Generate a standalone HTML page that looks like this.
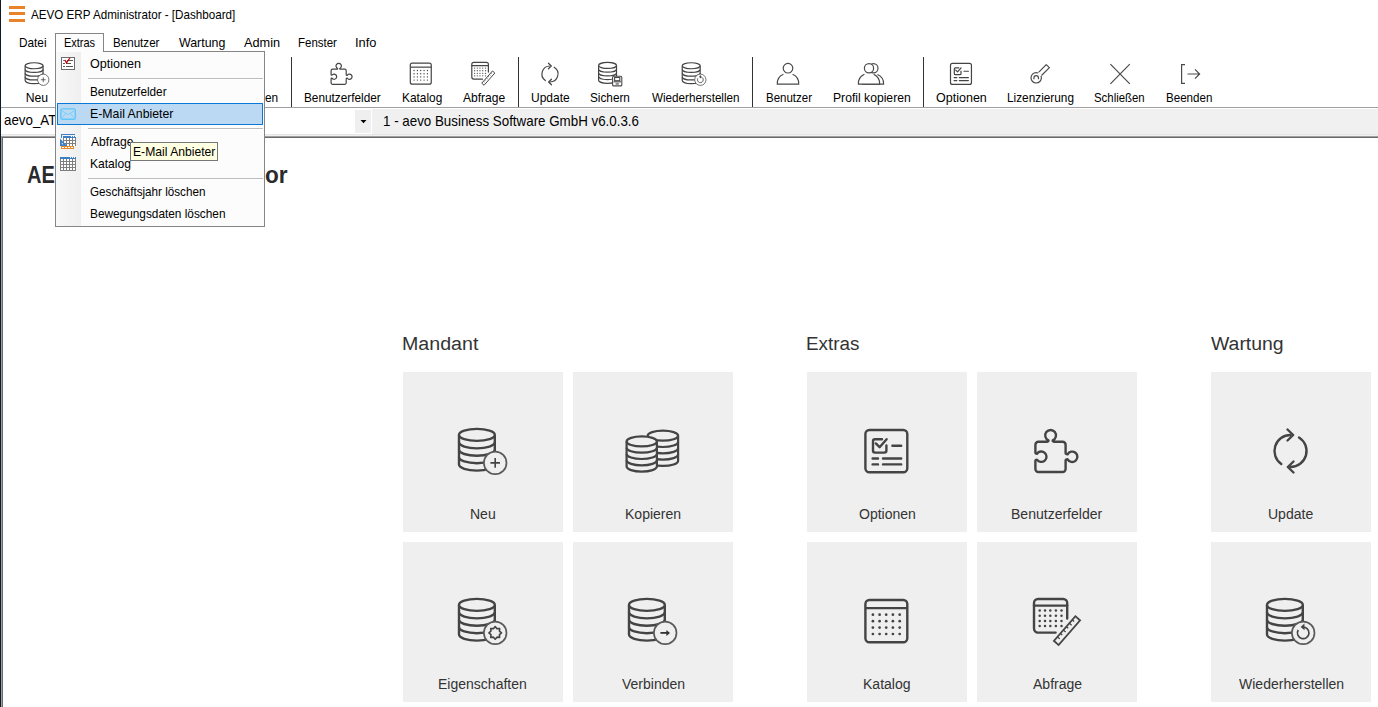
<!DOCTYPE html>
<html><head><meta charset="utf-8"><title>AEVO ERP Administrator - [Dashboard]</title>
<style>
html,body{margin:0;padding:0;width:1378px;height:707px;overflow:hidden;background:#fff;}
body{position:relative;font-family:"Liberation Sans",sans-serif;}
.t{position:absolute;white-space:nowrap;line-height:normal;transform-origin:0 0;}
.abs{position:absolute;}
.r{position:absolute;}
.tile{position:absolute;width:160px;height:160px;background:#efefef;}
.tile svg{position:absolute;left:0;top:0;}
</style></head><body>
<!-- left window edge -->
<div class="r" style="left:0;top:0;width:1px;height:707px;background:#111a25;z-index:30"></div>
<!-- hamburger -->
<div class="r" style="left:9px;top:6px;width:16px;height:3px;background:#e8822b"></div>
<div class="r" style="left:9px;top:12px;width:16px;height:3px;background:#e8822b"></div>
<div class="r" style="left:9px;top:19px;width:16px;height:3px;background:#e8822b"></div>
<!-- toolbar separators -->
<div class="r" style="left:291px;top:57px;width:1px;height:50px;background:#333"></div>
<div class="r" style="left:518px;top:57px;width:1px;height:50px;background:#333"></div>
<div class="r" style="left:752px;top:57px;width:1px;height:50px;background:#333"></div>
<div class="r" style="left:923px;top:57px;width:1px;height:50px;background:#333"></div>
<!-- combo bar -->
<div class="r" style="left:1px;top:107px;width:1377px;height:1px;background:#a0a0a0"></div>
<div class="r" style="left:1px;top:108px;width:1377px;height:28px;background:#f0f0f0"></div>
<div class="r" style="left:1px;top:108px;width:1377px;height:1px;background:#fff"></div>
<div class="r" style="left:1px;top:108px;width:371px;height:26px;background:#fff"></div>
<div class="r" style="left:355px;top:110px;width:16px;height:23px;background:#efefef"></div>
<svg class="abs" style="left:0;top:0" width="400" height="140"><path d="M360.5 120 H366.5 L363.5 123.3Z" fill="#000"/></svg>
<div class="r" style="left:1px;top:134px;width:1377px;height:1px;background:#e6e6e6"></div>
<div class="r" style="left:1px;top:136px;width:1377px;height:1px;background:#a0a0a0"></div>
<div class="r" style="left:2px;top:137px;width:1376px;height:1px;background:#6a6a6a"></div>
<div class="r" style="left:1px;top:136px;width:1px;height:571px;background:#a0a0a0"></div>
<div class="r" style="left:2px;top:137px;width:1px;height:570px;background:#6a6a6a"></div>
<!-- tiles -->
<div class="tile" style="left:403px;top:372px"><svg width="160" height="160" viewBox="0 0 160 160"><g fill="#efefef" stroke="#444" stroke-width="2.4"><path d="M56.00000000000001 62.9 V92.6 A17.9 6.0 0 0 0 91.80000000000001 92.6 V62.9"/><path d="M56.00000000000001 70.33 A17.9 6.0 0 0 0 91.80000000000001 70.33" fill="none"/><path d="M56.00000000000001 77.75 A17.9 6.0 0 0 0 91.80000000000001 77.75" fill="none"/><path d="M56.00000000000001 85.18 A17.9 6.0 0 0 0 91.80000000000001 85.18" fill="none"/><ellipse cx="73.9" cy="62.9" rx="17.9" ry="6.0"/></g><circle cx="92.2" cy="90.9" r="11.3" fill="#efefef" stroke="#5a5a5a" stroke-width="1.7"/><path d="M87.4 90.9H97.0M92.2 86.10000000000001V95.7" stroke="#444" stroke-width="1.6"/></svg></div>
<div class="tile" style="left:573px;top:372px"><svg width="160" height="160" viewBox="0 0 160 160"><g fill="#efefef" stroke="#444" stroke-width="2.2"><path d="M74.7 63.7 V88.9 A15.2 5.0 0 0 0 105.10000000000001 88.9 V63.7"/><path d="M74.70 70.00 A15.2 5.0 0 0 0 105.10 70.00" fill="none"/><path d="M74.70 76.30 A15.2 5.0 0 0 0 105.10 76.30" fill="none"/><path d="M74.70 82.60 A15.2 5.0 0 0 0 105.10 82.60" fill="none"/><ellipse cx="89.9" cy="63.7" rx="15.2" ry="5.0"/></g><g fill="#efefef" stroke="#444" stroke-width="2.2"><path d="M53.6 69.4 V94.60000000000001 A15.15 5.0 0 0 0 83.9 94.60000000000001 V69.4"/><path d="M53.60 75.70 A15.15 5.0 0 0 0 83.90 75.70" fill="none"/><path d="M53.60 82.00 A15.15 5.0 0 0 0 83.90 82.00" fill="none"/><path d="M53.60 88.30 A15.15 5.0 0 0 0 83.90 88.30" fill="none"/><ellipse cx="68.75" cy="69.4" rx="15.15" ry="5.0"/></g></svg></div>
<div class="tile" style="left:403px;top:542px"><svg width="160" height="160" viewBox="0 0 160 160"><g fill="#efefef" stroke="#444" stroke-width="2.4"><path d="M56.00000000000001 62.9 V92.6 A17.9 6.0 0 0 0 91.80000000000001 92.6 V62.9"/><path d="M56.00000000000001 70.33 A17.9 6.0 0 0 0 91.80000000000001 70.33" fill="none"/><path d="M56.00000000000001 77.75 A17.9 6.0 0 0 0 91.80000000000001 77.75" fill="none"/><path d="M56.00000000000001 85.18 A17.9 6.0 0 0 0 91.80000000000001 85.18" fill="none"/><ellipse cx="73.9" cy="62.9" rx="17.9" ry="6.0"/></g><circle cx="92.2" cy="90.9" r="11.3" fill="#efefef" stroke="#5a5a5a" stroke-width="1.7"/><polygon points="92.20,84.60 93.96,86.65 96.65,86.45 96.45,89.14 98.50,90.90 96.45,92.66 96.65,95.35 93.96,95.15 92.20,97.20 90.44,95.15 87.75,95.35 87.95,92.66 85.90,90.90 87.95,89.14 87.75,86.45 90.44,86.65" fill="none" stroke="#444" stroke-width="1.6" stroke-linejoin="round"/></svg></div>
<div class="tile" style="left:573px;top:542px"><svg width="160" height="160" viewBox="0 0 160 160"><g fill="#efefef" stroke="#444" stroke-width="2.4"><path d="M56.00000000000001 62.9 V92.6 A17.9 6.0 0 0 0 91.80000000000001 92.6 V62.9"/><path d="M56.00000000000001 70.33 A17.9 6.0 0 0 0 91.80000000000001 70.33" fill="none"/><path d="M56.00000000000001 77.75 A17.9 6.0 0 0 0 91.80000000000001 77.75" fill="none"/><path d="M56.00000000000001 85.18 A17.9 6.0 0 0 0 91.80000000000001 85.18" fill="none"/><ellipse cx="73.9" cy="62.9" rx="17.9" ry="6.0"/></g><circle cx="92.2" cy="90.9" r="11.3" fill="#efefef" stroke="#5a5a5a" stroke-width="1.7"/><path d="M87.4 90.9H95.7" stroke="#333" stroke-width="1.8"/><path d="M93.4 87.9L97.0 90.9L93.4 93.9Z" fill="#333"/></svg></div>
<div class="tile" style="left:807px;top:372px"><svg width="160" height="160" viewBox="0 0 160 160"><g fill="none" stroke="#444" stroke-width="2.4" stroke-linecap="round" stroke-linejoin="round"><rect x="58.4" y="58" width="41.9" height="42.2" rx="4"/><path d="M75 67.2 H68 A2 2 0 0 0 66 69.2 V78.6 A2 2 0 0 0 68 80.6 H77.4 A2 2 0 0 0 79.4 78.6 V73.5"/><path d="M68.8 71.4 L72.6 75.2 L79.6 67.2"/><path d="M85.4 73.8 H94.2 M65.6 86.5 H71 M76 86.5 H94.2 M65.6 92.4 H71 M76 92.4 H94.2"/></g></svg></div>
<div class="tile" style="left:977px;top:372px"><svg width="160" height="160" viewBox="0 0 160 160"><path d="M61.4 69.7 H70.4 Q71.6 69.7 71.5 68.3 A5.4 5.4 0 1 1 75.7 68.3 Q75.6 69.7 76.8 69.7 H85.6 A3 3 0 0 1 88.6 72.7 V80.8 Q88.6 82.3 90.6 82.3 A5.2 5.2 0 1 1 90.6 87.3 Q88.6 87.3 88.6 88.8 V97 A3 3 0 0 1 85.6 100 H61.4 A3 3 0 0 1 58.4 97 V88.8 Q58.4 87.7 60 87.62 A5.2 5.2 0 1 0 60 81.78 Q58.4 81.7 58.4 80.6 V72.7 A3 3 0 0 1 61.4 69.7 Z" fill="none" stroke="#444" stroke-width="2.4" stroke-linejoin="round"/></svg></div>
<div class="tile" style="left:807px;top:542px"><svg width="160" height="160" viewBox="0 0 160 160"><g fill="none" stroke="#444" stroke-width="2.4"><rect x="58.4" y="58" width="41.9" height="42.2" rx="4"/><path d="M58.4 66.1 H100.3"/></g><circle cx="65.9" cy="72.7" r="1.35" fill="#444"/><circle cx="65.9" cy="79.2" r="1.35" fill="#444"/><circle cx="65.9" cy="85.6" r="1.35" fill="#444"/><circle cx="65.9" cy="92" r="1.35" fill="#444"/><circle cx="72.6" cy="72.7" r="1.35" fill="#444"/><circle cx="72.6" cy="79.2" r="1.35" fill="#444"/><circle cx="72.6" cy="85.6" r="1.35" fill="#444"/><circle cx="72.6" cy="92" r="1.35" fill="#444"/><circle cx="79.2" cy="72.7" r="1.35" fill="#444"/><circle cx="79.2" cy="79.2" r="1.35" fill="#444"/><circle cx="79.2" cy="85.6" r="1.35" fill="#444"/><circle cx="79.2" cy="92" r="1.35" fill="#444"/><circle cx="85.9" cy="72.7" r="1.35" fill="#444"/><circle cx="85.9" cy="79.2" r="1.35" fill="#444"/><circle cx="85.9" cy="85.6" r="1.35" fill="#444"/><circle cx="85.9" cy="92" r="1.35" fill="#444"/><circle cx="92.7" cy="72.7" r="1.35" fill="#444"/><circle cx="92.7" cy="79.2" r="1.35" fill="#444"/><circle cx="92.7" cy="85.6" r="1.35" fill="#444"/><circle cx="92.7" cy="92" r="1.35" fill="#444"/></svg></div>
<div class="tile" style="left:977px;top:542px"><svg width="160" height="160" viewBox="0 0 160 160"><g fill="none" stroke="#444" stroke-width="2.4" stroke-linecap="round"><path d="M78.6 90.6 H61 A4 4 0 0 1 57 86.6 V61 A4 4 0 0 1 61 57 H86.2 A4 4 0 0 1 90.2 61 V76.6"/><path d="M57 63.6 H90.2"/></g><circle cx="62.7" cy="68.5" r="1.25" fill="#444"/><circle cx="62.7" cy="73.8" r="1.25" fill="#444"/><circle cx="62.7" cy="78.9" r="1.25" fill="#444"/><circle cx="62.7" cy="83.9" r="1.25" fill="#444"/><circle cx="68" cy="68.5" r="1.25" fill="#444"/><circle cx="68" cy="73.8" r="1.25" fill="#444"/><circle cx="68" cy="78.9" r="1.25" fill="#444"/><circle cx="68" cy="83.9" r="1.25" fill="#444"/><circle cx="73.3" cy="68.5" r="1.25" fill="#444"/><circle cx="73.3" cy="73.8" r="1.25" fill="#444"/><circle cx="73.3" cy="78.9" r="1.25" fill="#444"/><circle cx="73.3" cy="83.9" r="1.25" fill="#444"/><circle cx="78.9" cy="68.5" r="1.25" fill="#444"/><circle cx="78.9" cy="73.8" r="1.25" fill="#444"/><circle cx="78.9" cy="78.9" r="1.25" fill="#444"/><circle cx="78.9" cy="83.9" r="1.25" fill="#444"/><circle cx="84.5" cy="68.5" r="1.25" fill="#444"/><circle cx="84.5" cy="73.8" r="1.25" fill="#444"/><circle cx="84.5" cy="78.9" r="1.25" fill="#444"/><circle cx="84.5" cy="83.9" r="1.25" fill="#444"/><g transform="translate(90,88.6) rotate(-48.8)"><rect x="-16.3" y="-3.1" width="32.6" height="6.2" fill="#efefef" stroke="#444" stroke-width="1.8"/><path d="M-11 -3 V0 M-6.5 -3 V-0.6 M-2 -3 V0 M2.5 -3 V-0.6 M7 -3 V0 M11.5 -3 V-0.6" stroke="#444" stroke-width="1.3"/></g></svg></div>
<div class="tile" style="left:1211px;top:372px"><svg width="160" height="160" viewBox="0 0 160 160"><g fill="none" stroke="#444" stroke-width="2.4" stroke-linecap="round" stroke-linejoin="round"><path d="M79.5 63 A16 16 0 0 0 70.3 92.1"/><path d="M88 65.4 A16 16 0 0 1 79.5 95"/><path d="M76.5 57.5 L82.2 63 L76.5 68.5"/><path d="M82.5 89.5 L76.8 95 L82.5 100.5"/></g></svg></div>
<div class="tile" style="left:1211px;top:542px"><svg width="160" height="160" viewBox="0 0 160 160"><g fill="#efefef" stroke="#444" stroke-width="2.4"><path d="M56.00000000000001 62.9 V92.6 A17.9 6.0 0 0 0 91.80000000000001 92.6 V62.9"/><path d="M56.00000000000001 70.33 A17.9 6.0 0 0 0 91.80000000000001 70.33" fill="none"/><path d="M56.00000000000001 77.75 A17.9 6.0 0 0 0 91.80000000000001 77.75" fill="none"/><path d="M56.00000000000001 85.18 A17.9 6.0 0 0 0 91.80000000000001 85.18" fill="none"/><ellipse cx="73.9" cy="62.9" rx="17.9" ry="6.0"/></g><circle cx="92.2" cy="90.9" r="11.3" fill="#efefef" stroke="#5a5a5a" stroke-width="1.7"/><path d="M91.19 85.19 A5.8 5.8 0 1 1 87.18 88.00" fill="none" stroke="#444" stroke-width="1.7"/><path d="M89.60 84.90 L93.40 81.50 L93.60 88.30Z" fill="#444"/></svg></div>
<svg class="abs" style="left:0;top:0" width="1378" height="110"><g transform="translate(-2.85,34.3) scale(0.5)"><g fill="#fff" stroke="#444" stroke-width="2.4"><path d="M56.00000000000001 62.9 V92.6 A17.9 6.0 0 0 0 91.80000000000001 92.6 V62.9"/><path d="M56.00000000000001 70.33 A17.9 6.0 0 0 0 91.80000000000001 70.33" fill="none"/><path d="M56.00000000000001 77.75 A17.9 6.0 0 0 0 91.80000000000001 77.75" fill="none"/><path d="M56.00000000000001 85.18 A17.9 6.0 0 0 0 91.80000000000001 85.18" fill="none"/><ellipse cx="73.9" cy="62.9" rx="17.9" ry="6.0"/></g><circle cx="92.2" cy="90.9" r="11.3" fill="#fff" stroke="#5a5a5a" stroke-width="1.7"/><path d="M87.4 90.9H97.0M92.2 86.10000000000001V95.7" stroke="#444" stroke-width="1.6"/></g><g transform="translate(301.9,34.35) scale(0.5)"><path d="M61.4 69.7 H70.4 Q71.6 69.7 71.5 68.3 A5.4 5.4 0 1 1 75.7 68.3 Q75.6 69.7 76.8 69.7 H85.6 A3 3 0 0 1 88.6 72.7 V80.8 Q88.6 82.3 90.6 82.3 A5.2 5.2 0 1 1 90.6 87.3 Q88.6 87.3 88.6 88.8 V97 A3 3 0 0 1 85.6 100 H61.4 A3 3 0 0 1 58.4 97 V88.8 Q58.4 87.7 60 87.62 A5.2 5.2 0 1 0 60 81.78 Q58.4 81.7 58.4 80.6 V72.7 A3 3 0 0 1 61.4 69.7 Z" fill="none" stroke="#444" stroke-width="2.4" stroke-linejoin="round"/></g><g transform="translate(381.1,34.1) scale(0.5)"><g fill="none" stroke="#444" stroke-width="2.4"><rect x="58.4" y="58" width="41.9" height="42.2" rx="4"/><path d="M58.4 66.1 H100.3"/></g><circle cx="65.9" cy="72.7" r="1.35" fill="#444"/><circle cx="65.9" cy="79.2" r="1.35" fill="#444"/><circle cx="65.9" cy="85.6" r="1.35" fill="#444"/><circle cx="65.9" cy="92" r="1.35" fill="#444"/><circle cx="72.6" cy="72.7" r="1.35" fill="#444"/><circle cx="72.6" cy="79.2" r="1.35" fill="#444"/><circle cx="72.6" cy="85.6" r="1.35" fill="#444"/><circle cx="72.6" cy="92" r="1.35" fill="#444"/><circle cx="79.2" cy="72.7" r="1.35" fill="#444"/><circle cx="79.2" cy="79.2" r="1.35" fill="#444"/><circle cx="79.2" cy="85.6" r="1.35" fill="#444"/><circle cx="79.2" cy="92" r="1.35" fill="#444"/><circle cx="85.9" cy="72.7" r="1.35" fill="#444"/><circle cx="85.9" cy="79.2" r="1.35" fill="#444"/><circle cx="85.9" cy="85.6" r="1.35" fill="#444"/><circle cx="85.9" cy="92" r="1.35" fill="#444"/><circle cx="92.7" cy="72.7" r="1.35" fill="#444"/><circle cx="92.7" cy="79.2" r="1.35" fill="#444"/><circle cx="92.7" cy="85.6" r="1.35" fill="#444"/><circle cx="92.7" cy="92" r="1.35" fill="#444"/></g><g transform="translate(443.3,33.8) scale(0.5)"><g fill="none" stroke="#444" stroke-width="2.4" stroke-linecap="round"><path d="M78.6 90.6 H61 A4 4 0 0 1 57 86.6 V61 A4 4 0 0 1 61 57 H86.2 A4 4 0 0 1 90.2 61 V76.6"/><path d="M57 63.6 H90.2"/></g><circle cx="62.7" cy="68.5" r="1.25" fill="#444"/><circle cx="62.7" cy="73.8" r="1.25" fill="#444"/><circle cx="62.7" cy="78.9" r="1.25" fill="#444"/><circle cx="62.7" cy="83.9" r="1.25" fill="#444"/><circle cx="68" cy="68.5" r="1.25" fill="#444"/><circle cx="68" cy="73.8" r="1.25" fill="#444"/><circle cx="68" cy="78.9" r="1.25" fill="#444"/><circle cx="68" cy="83.9" r="1.25" fill="#444"/><circle cx="73.3" cy="68.5" r="1.25" fill="#444"/><circle cx="73.3" cy="73.8" r="1.25" fill="#444"/><circle cx="73.3" cy="78.9" r="1.25" fill="#444"/><circle cx="73.3" cy="83.9" r="1.25" fill="#444"/><circle cx="78.9" cy="68.5" r="1.25" fill="#444"/><circle cx="78.9" cy="73.8" r="1.25" fill="#444"/><circle cx="78.9" cy="78.9" r="1.25" fill="#444"/><circle cx="78.9" cy="83.9" r="1.25" fill="#444"/><circle cx="84.5" cy="68.5" r="1.25" fill="#444"/><circle cx="84.5" cy="73.8" r="1.25" fill="#444"/><circle cx="84.5" cy="78.9" r="1.25" fill="#444"/><circle cx="84.5" cy="83.9" r="1.25" fill="#444"/><g transform="translate(90,88.6) rotate(-48.8)"><rect x="-16.3" y="-3.1" width="32.6" height="6.2" fill="#fff" stroke="#444" stroke-width="1.8"/><path d="M-11 -3 V0 M-6.5 -3 V-0.6 M-2 -3 V0 M2.5 -3 V-0.6 M7 -3 V0 M11.5 -3 V-0.6" stroke="#444" stroke-width="1.3"/></g></g><g transform="translate(510.2,34.5) scale(0.5)"><g fill="none" stroke="#444" stroke-width="2.4" stroke-linecap="round" stroke-linejoin="round"><path d="M79.5 63 A16 16 0 0 0 70.3 92.1"/><path d="M88 65.4 A16 16 0 0 1 79.5 95"/><path d="M76.5 57.5 L82.2 63 L76.5 68.5"/><path d="M82.5 89.5 L76.8 95 L82.5 100.5"/></g></g><g transform="translate(654.25,34.3) scale(0.5)"><g fill="#fff" stroke="#444" stroke-width="2.4"><path d="M56.00000000000001 62.9 V92.6 A17.9 6.0 0 0 0 91.80000000000001 92.6 V62.9"/><path d="M56.00000000000001 70.33 A17.9 6.0 0 0 0 91.80000000000001 70.33" fill="none"/><path d="M56.00000000000001 77.75 A17.9 6.0 0 0 0 91.80000000000001 77.75" fill="none"/><path d="M56.00000000000001 85.18 A17.9 6.0 0 0 0 91.80000000000001 85.18" fill="none"/><ellipse cx="73.9" cy="62.9" rx="17.9" ry="6.0"/></g><circle cx="92.2" cy="90.9" r="11.3" fill="#fff" stroke="#5a5a5a" stroke-width="1.7"/><path d="M91.19 85.19 A5.8 5.8 0 1 1 87.18 88.00" fill="none" stroke="#444" stroke-width="1.7"/><path d="M89.60 84.90 L93.40 81.50 L93.60 88.30Z" fill="#444"/></g><g transform="translate(921.3,34.35) scale(0.5)"><g fill="none" stroke="#444" stroke-width="2.4" stroke-linecap="round" stroke-linejoin="round"><rect x="58.4" y="58" width="41.9" height="42.2" rx="4"/><path d="M75 67.2 H68 A2 2 0 0 0 66 69.2 V78.6 A2 2 0 0 0 68 80.6 H77.4 A2 2 0 0 0 79.4 78.6 V73.5"/><path d="M68.8 71.4 L72.6 75.2 L79.6 67.2"/><path d="M85.4 73.8 H94.2 M65.6 86.5 H71 M76 86.5 H94.2 M65.6 92.4 H71 M76 92.4 H94.2"/></g></g><g transform="translate(570.6,34.0) scale(0.5)"><g fill="#fff" stroke="#444" stroke-width="2.4"><path d="M56.00000000000001 62.9 V92.6 A17.9 6.0 0 0 0 91.80000000000001 92.6 V62.9"/><path d="M56.00000000000001 70.33 A17.9 6.0 0 0 0 91.80000000000001 70.33" fill="none"/><path d="M56.00000000000001 77.75 A17.9 6.0 0 0 0 91.80000000000001 77.75" fill="none"/><path d="M56.00000000000001 85.18 A17.9 6.0 0 0 0 91.80000000000001 85.18" fill="none"/><ellipse cx="73.9" cy="62.9" rx="17.9" ry="6.0"/></g></g><g stroke="#4a4a4a" stroke-width="1.1" fill="#fff"><rect x="612.6" y="76.3" width="9.2" height="9.6" rx="1"/><rect x="614.6" y="77.5" width="5.2" height="3.2" fill="#fff"/><path d="M613.5 81.8 H621" /><rect x="615.6" y="82.8" width="3.2" height="2" fill="#888" stroke="none"/></g><g stroke="#4a4a4a" stroke-width="1.2" fill="none"><circle cx="788" cy="68.2" r="4.8" fill="#fff"/><path d="M783.4 74.3 A10.7 10.2 0 0 0 777.3 84.1 H798.7 A10.7 10.2 0 0 0 792.6 74.3" fill="#fff"/></g><g stroke="#4a4a4a" stroke-width="1.2" fill="none"><circle cx="873.4" cy="68.3" r="4.6" fill="#fff"/><path d="M877.5 74.5 A10.7 10.2 0 0 1 883.6 84.1 H862" fill="#fff"/><circle cx="869" cy="68.3" r="4.6" fill="#fff"/><path d="M864.4 74.3 A10.7 10.2 0 0 0 858.4 84.1 H879.6 A10.7 10.2 0 0 0 873.6 74.3" fill="#fff"/></g><g stroke="#4a4a4a" stroke-width="1.2" fill="none" stroke-linejoin="round"><path d="M1038.4 72.6 L1046.2 64.6 L1049.4 67.6 L1041.2 75.7"/><circle cx="1036.2" cy="77.8" r="5.2" fill="#fff"/><path d="M1038.4 72.6 L1041.2 75.7" stroke="#fff" stroke-width="1.6"/><path d="M1033.9 79.2 V78 A2.3 2.3 0 0 1 1038.5 78 V79.2"/></g><path d="M1110.4 64.2 L1129.8 83.8 M1129.8 64.2 L1110.4 83.8" stroke="#4a4a4a" stroke-width="1.2"/><g stroke="#4a4a4a" stroke-width="1.2" fill="none"><path d="M1185 64.6 H1181.6 V83.4 H1185"/><path d="M1187.5 74 H1199.4 M1195 69.4 L1199.6 74 L1195 78.6"/></g></svg>
<!-- text -->
<div class="t" style="left:30.60px;top:7.80px;font-size:12.2px;font-weight:400;color:#000;transform:scaleX(0.9554);z-index:1">AEVO ERP Administrator - [Dashboard]</div>
<div class="t" style="left:64.40px;top:35.70px;font-size:12.2px;font-weight:400;color:#000;transform:scaleX(0.9000);z-index:10">Extras</div>
<div class="t" style="left:18.63px;top:35.70px;font-size:12.2px;font-weight:400;color:#000;transform:scaleX(0.9667);z-index:1">Datei</div>
<div class="t" style="left:113.25px;top:35.70px;font-size:12.2px;font-weight:400;color:#000;transform:scaleX(0.9521);z-index:1">Benutzer</div>
<div class="t" style="left:178.80px;top:35.70px;font-size:12.2px;font-weight:400;color:#000;transform:scaleX(1.0156);z-index:1">Wartung</div>
<div class="t" style="left:244.10px;top:35.70px;font-size:12.2px;font-weight:400;color:#000;transform:scaleX(1.0441);z-index:1">Admin</div>
<div class="t" style="left:298.26px;top:35.70px;font-size:12.2px;font-weight:400;color:#000;transform:scaleX(0.9425);z-index:1">Fenster</div>
<div class="t" style="left:355.45px;top:35.70px;font-size:12.2px;font-weight:400;color:#000;transform:scaleX(1.0526);z-index:1">Info</div>
<div class="t" style="left:25.70px;top:90.60px;font-size:12.2px;font-weight:400;color:#000;transform:scaleX(1.0000);z-index:1">Neu</div>
<div class="t" style="left:304.33px;top:90.60px;font-size:12.2px;font-weight:400;color:#000;transform:scaleX(0.9679);z-index:1">Benutzerfelder</div>
<div class="t" style="left:401.52px;top:90.60px;font-size:12.2px;font-weight:400;color:#000;transform:scaleX(0.9750);z-index:1">Katalog</div>
<div class="t" style="left:463.40px;top:90.60px;font-size:12.2px;font-weight:400;color:#000;transform:scaleX(0.9881);z-index:1">Abfrage</div>
<div class="t" style="left:531.42px;top:90.60px;font-size:12.2px;font-weight:400;color:#000;transform:scaleX(0.9842);z-index:1">Update</div>
<div class="t" style="left:590.13px;top:90.60px;font-size:12.2px;font-weight:400;color:#000;transform:scaleX(0.9650);z-index:1">Sichern</div>
<div class="t" style="left:651.60px;top:90.60px;font-size:12.2px;font-weight:400;color:#000;transform:scaleX(0.9571);z-index:1">Wiederherstellen</div>
<div class="t" style="left:765.56px;top:90.60px;font-size:12.2px;font-weight:400;color:#000;transform:scaleX(0.9437);z-index:1">Benutzer</div>
<div class="t" style="left:832.60px;top:90.60px;font-size:12.2px;font-weight:400;color:#000;transform:scaleX(0.9974);z-index:1">Profil kopieren</div>
<div class="t" style="left:936.17px;top:90.60px;font-size:12.2px;font-weight:400;color:#000;transform:scaleX(1.0271);z-index:1">Optionen</div>
<div class="t" style="left:1007.33px;top:90.60px;font-size:12.2px;font-weight:400;color:#000;transform:scaleX(0.9687);z-index:1">Lizenzierung</div>
<div class="t" style="left:1094.46px;top:90.60px;font-size:12.2px;font-weight:400;color:#000;transform:scaleX(0.9358);z-index:1">Schließen</div>
<div class="t" style="left:1166.35px;top:90.60px;font-size:12.2px;font-weight:400;color:#000;transform:scaleX(0.9511);z-index:1">Beenden</div>
<div class="t" style="left:264.62px;top:90.60px;font-size:12.2px;font-weight:400;color:#000;transform:scaleX(0.9750);z-index:1">en</div>
<div class="t" style="left:4.46px;top:112.00px;font-size:14.2px;font-weight:400;color:#000;transform:scaleX(0.9410);z-index:1">aevo_ATB</div>
<div class="t" style="left:382.66px;top:112.80px;font-size:14.2px;font-weight:400;color:#000;transform:scaleX(0.9410);z-index:1">1 - aevo Business Software GmbH v6.0.3.6</div>
<div class="t" style="left:27.13px;top:162.00px;font-size:23.0px;font-weight:700;color:#2b2b2b;transform:scaleX(0.8700);z-index:1">AE</div>
<div class="t" style="left:265.12px;top:162.00px;font-size:23.0px;font-weight:700;color:#2b2b2b;transform:scaleX(0.9818);z-index:1">or</div>
<div class="t" style="left:402.06px;top:332.70px;font-size:19.2px;font-weight:400;color:#333;transform:scaleX(1.0222);z-index:1">Mandant</div>
<div class="t" style="left:806.13px;top:333.00px;font-size:19.2px;font-weight:400;color:#333;transform:scaleX(0.9827);z-index:1">Extras</div>
<div class="t" style="left:1211.20px;top:332.60px;font-size:19.2px;font-weight:400;color:#333;transform:scaleX(1.0113);z-index:1">Wartung</div>
<div class="t" style="left:469.79px;top:506.60px;font-size:13.8px;font-weight:400;color:#333;transform:scaleX(1.0159);z-index:1">Neu</div>
<div class="t" style="left:625.06px;top:506.60px;font-size:13.8px;font-weight:400;color:#333;transform:scaleX(1.0159);z-index:1">Kopieren</div>
<div class="t" style="left:438.30px;top:676.60px;font-size:13.8px;font-weight:400;color:#333;transform:scaleX(1.0159);z-index:1">Eigenschaften</div>
<div class="t" style="left:622.01px;top:676.60px;font-size:13.8px;font-weight:400;color:#333;transform:scaleX(1.0159);z-index:1">Verbinden</div>
<div class="t" style="left:858.55px;top:506.60px;font-size:13.8px;font-weight:400;color:#333;transform:scaleX(1.0159);z-index:1">Optionen</div>
<div class="t" style="left:1010.78px;top:506.60px;font-size:13.8px;font-weight:400;color:#333;transform:scaleX(1.0159);z-index:1">Benutzerfelder</div>
<div class="t" style="left:863.13px;top:676.60px;font-size:13.8px;font-weight:400;color:#333;transform:scaleX(1.0159);z-index:1">Katalog</div>
<div class="t" style="left:1032.62px;top:676.60px;font-size:13.8px;font-weight:400;color:#333;transform:scaleX(1.0159);z-index:1">Abfrage</div>
<div class="t" style="left:1268.14px;top:506.60px;font-size:13.8px;font-weight:400;color:#333;transform:scaleX(1.0159);z-index:1">Update</div>
<div class="t" style="left:1238.68px;top:676.60px;font-size:13.8px;font-weight:400;color:#333;transform:scaleX(1.0159);z-index:1">Wiederherstellen</div>
<div class="t" style="left:90.10px;top:56.90px;font-size:12.6px;font-weight:400;color:#000;transform:scaleX(0.9980);z-index:10">Optionen</div>
<div class="t" style="left:90.17px;top:85.00px;font-size:12.6px;font-weight:400;color:#000;transform:scaleX(0.9346);z-index:10">Benutzerfelder</div>
<div class="t" style="left:90.12px;top:106.50px;font-size:12.6px;font-weight:400;color:#000;transform:scaleX(0.9774);z-index:10">E-Mail Anbieter</div>
<div class="t" style="left:91.10px;top:134.70px;font-size:12.6px;font-weight:400;color:#000;transform:scaleX(0.9605);z-index:10">Abfrage</div>
<div class="t" style="left:90.14px;top:157.00px;font-size:12.6px;font-weight:400;color:#000;transform:scaleX(0.9585);z-index:10">Katalog</div>
<div class="t" style="left:90.17px;top:185.00px;font-size:12.6px;font-weight:400;color:#000;transform:scaleX(0.9260);z-index:10">Geschäftsjahr löschen</div>
<div class="t" style="left:90.16px;top:206.80px;font-size:12.6px;font-weight:400;color:#000;transform:scaleX(0.9392);z-index:10">Bewegungsdaten löschen</div>
<div class="t" style="left:132.62px;top:145.00px;font-size:12.4px;font-weight:400;color:#000;transform:scaleX(0.9807);z-index:20">E-Mail Anbieter</div>
<!-- extras tab -->
<div class="r" style="left:55px;top:33px;width:47px;height:18px;border:1px solid #858585;border-bottom:none;background:#fcfcfc;z-index:9"></div>
<!-- dropdown -->
<div class="r" style="left:55px;top:51px;width:208px;height:175px;border:1px solid #858585;border-top:none;background:#fcfcfc;z-index:9"></div>
<div class="r" style="left:103px;top:51px;width:161px;height:1px;background:#858585;z-index:9"></div>
<div class="r" style="left:56px;top:52px;width:25px;height:174px;background:linear-gradient(90deg,#f8f8f8,#efefef);z-index:9"></div>
<div class="r" style="left:88px;top:78px;width:175px;height:1px;background:#bdbdbd;z-index:9"></div><div class="r" style="left:88px;top:79px;width:175px;height:1px;background:#fff;z-index:9"></div>
<div class="r" style="left:88px;top:128px;width:175px;height:1px;background:#bdbdbd;z-index:9"></div><div class="r" style="left:88px;top:129px;width:175px;height:1px;background:#fff;z-index:9"></div>
<div class="r" style="left:88px;top:178px;width:175px;height:1px;background:#bdbdbd;z-index:9"></div><div class="r" style="left:88px;top:179px;width:175px;height:1px;background:#fff;z-index:9"></div>
<div class="r" style="left:57px;top:103px;width:204px;height:20px;border:1px solid #0a78d5;background:#bcd9f3;z-index:9"></div>
<svg class="abs" style="left:0;top:0;z-index:11" width="300" height="240"><rect x="61.5" y="57.5" width="13" height="12" fill="#fff" stroke="#6d6d6d"/><path d="M67 60.5 H73 M63 63.5 H65 M66 63.5 H71 M63 66.5 H65 M66 66.5 H73" stroke="#555" stroke-width="1"/><path d="M63 60.5 H65" stroke="#3b8ad8" stroke-width="1"/><path d="M64.9 60.2 L66.5 62.9 L69.9 58" stroke="#cc0000" stroke-width="1.3" fill="none"/><rect x="60.9" y="108.9" width="14.4" height="10.4" rx="1.6" fill="none" stroke="#5ec8f8" stroke-width="1.4"/><path d="M62.2 110.9 L68.1 114.6 L74 110.9 M62.2 117.6 L65.8 113.6 M74 117.6 L70.4 113.6" stroke="#6ccdf8" stroke-width="0.9" fill="none"/><g shape-rendering="crispEdges"><rect x="61" y="134" width="14" height="1" fill="#3d7fc6"/><rect x="61" y="134" width="1" height="4" fill="#3d7fc6"/><rect x="63" y="138" width="13" height="8" fill="#7f7f7f"/><rect x="63" y="136" width="13" height="2" fill="#3d7fc6"/><rect x="71" y="136" width="1" height="1" fill="#fff"/><rect x="73" y="136" width="1" height="1" fill="#fff"/><rect x="75" y="136" width="1" height="1" fill="#fff"/><rect x="64" y="138" width="2" height="2" fill="#fff"/><rect x="64" y="141" width="2" height="2" fill="#fff"/><rect x="64" y="144" width="2" height="2" fill="#fff"/><rect x="67" y="138" width="2" height="2" fill="#fff"/><rect x="67" y="141" width="2" height="2" fill="#fff"/><rect x="67" y="144" width="2" height="2" fill="#fff"/><rect x="70" y="138" width="2" height="2" fill="#fff"/><rect x="70" y="141" width="2" height="2" fill="#fff"/><rect x="70" y="144" width="2" height="2" fill="#fff"/><rect x="73" y="138" width="2" height="2" fill="#fff"/><rect x="73" y="141" width="2" height="2" fill="#fff"/><rect x="73" y="144" width="2" height="2" fill="#fff"/></g><path d="M60 138.6 V146 H67.4 Z" fill="#3d7fc6"/><path d="M61.8 142.6 V144.2 H63.4Z" fill="#fff"/><g shape-rendering="crispEdges"><rect x="61" y="146" width="13" height="3" fill="#e98a2e"/><rect x="62" y="147" width="2" height="1" fill="#fff"/><rect x="65" y="147" width="2" height="1" fill="#fff"/><rect x="68" y="147" width="2" height="1" fill="#fff"/><rect x="71" y="147" width="2" height="1" fill="#fff"/></g><g shape-rendering="crispEdges"><rect x="60" y="159" width="16" height="12" fill="#7f7f7f"/><rect x="60" y="157" width="16" height="2" fill="#3d7fc6"/><rect x="70" y="157" width="1" height="1" fill="#fcfcfc"/><rect x="72" y="157" width="1" height="1" fill="#fcfcfc"/><rect x="74" y="157" width="1" height="1" fill="#fcfcfc"/><rect x="61" y="159" width="2" height="2" fill="#fff"/><rect x="61" y="162" width="2" height="2" fill="#fff"/><rect x="61" y="165" width="2" height="2" fill="#fff"/><rect x="61" y="168" width="2" height="2" fill="#fff"/><rect x="64" y="159" width="2" height="2" fill="#fff"/><rect x="64" y="162" width="2" height="2" fill="#fff"/><rect x="64" y="165" width="2" height="2" fill="#fff"/><rect x="64" y="168" width="2" height="2" fill="#fff"/><rect x="67" y="159" width="2" height="2" fill="#fff"/><rect x="67" y="162" width="2" height="2" fill="#fff"/><rect x="67" y="165" width="2" height="2" fill="#fff"/><rect x="67" y="168" width="2" height="2" fill="#fff"/><rect x="70" y="159" width="2" height="2" fill="#fff"/><rect x="70" y="162" width="2" height="2" fill="#fff"/><rect x="70" y="165" width="2" height="2" fill="#fff"/><rect x="70" y="168" width="2" height="2" fill="#fff"/><rect x="73" y="159" width="2" height="2" fill="#fff"/><rect x="73" y="162" width="2" height="2" fill="#fff"/><rect x="73" y="165" width="2" height="2" fill="#fff"/><rect x="73" y="168" width="2" height="2" fill="#fff"/></g></svg>
<!-- tooltip -->
<div class="r" style="left:130px;top:142px;width:86px;height:17px;border:1px solid #767676;background:#ffffe1;z-index:19"></div>
</body></html>
